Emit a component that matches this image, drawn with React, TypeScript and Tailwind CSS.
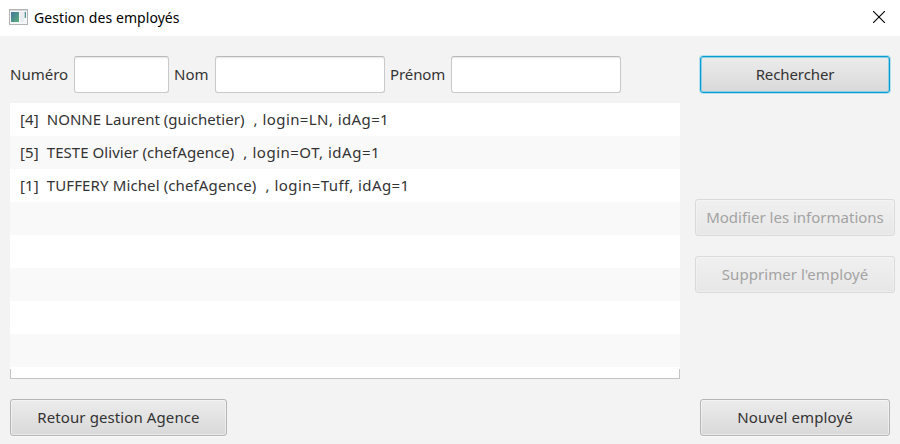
import React from "react";

const raised =
  "flex h-[37px] items-center justify-center rounded-[3px] border border-[#b5b5b5] bg-linear-to-b from-[#ececec] to-[#d9d9d9] pb-[2px] whitespace-pre shadow-[inset_0_0_0_1px_rgba(255,255,255,0.45),0_1px_0_#f9f9f9]";
const disabled =
  "flex h-[37px] w-[200px] items-center justify-center rounded-[3px] border border-[#dadada] bg-linear-to-b from-[#f0f0f0] to-[#e7e7e7] pb-[2px] whitespace-pre text-[#a3a3a3] shadow-[inset_0_0_0_1px_rgba(255,255,255,0.25)]";
const field =
  "h-[37px] rounded-[3px] border border-[#c9c9c9] border-t-[#b8b8b8] bg-white shadow-[inset_0_2px_2px_-1px_#e4e4e4] outline-none";

const employees = [
  { id: 4, name: "NONNE Laurent (guichetier)", details: "login=LN, idAg=1", nameClass: "tracking-[0.03px]", detailsClass: "tracking-[0.4px]" },
  { id: 5, name: "TESTE Olivier (chefAgence)", details: "login=OT, idAg=1", nameClass: "tracking-[0.05px]", detailsClass: "tracking-[0.5px]" },
  { id: 1, name: "TUFFERY Michel (chefAgence)", details: "login=Tuff, idAg=1", nameClass: "tracking-[0.12px]", detailsClass: "tracking-[0.4px]" },
];

function AppIcon() {
  return (
    <svg className="mb-[2px]" width="19" height="16" viewBox="0 0 19 16">
      <defs>
        <linearGradient id="pane" x1="0" y1="0" x2="1" y2="1">
          <stop offset="0" stopColor="#41759f" />
          <stop offset="1" stopColor="#5aae78" />
        </linearGradient>
      </defs>
      <rect x="0.5" y="0.5" width="18" height="15" fill="#f4f6f8" stroke="#b4b4b4" />
      <rect x="1" y="1" width="17" height="1" fill="#d4d6d8" />
      <rect x="2" y="3" width="8" height="10" fill="url(#pane)" />
      <rect x="11" y="3" width="4" height="10" fill="#e9ecf1" />
      <rect x="15.7" y="3" width="1.3" height="6" fill="url(#pane)" />
    </svg>
  );
}

export default function App() {
  return (
    <div className="flex h-[444px] w-[900px] flex-col overflow-hidden bg-[#f3f3f3] font-['Noto_Sans','Open_Sans',sans-serif] text-[15px] leading-[20px] text-[#333333]">
      <header className="flex h-[36px] shrink-0 items-center bg-white pr-[15px] pl-[9px] text-black">
        <AppIcon />
        <h1 className="ml-[6px] text-[14px] tracking-[0.07px] whitespace-pre">Gestion des employés</h1>
        <svg className="mb-[2px] ml-auto" width="12" height="12" viewBox="0 0 12 12" stroke="#000" strokeWidth="1.1">
          <path d="M0 0L12 12M12 0L0 12" />
        </svg>
      </header>
      <main className="flex h-[408px] justify-between pt-[20px] pr-[5px] pb-[8px] pl-[10px]">
        <section className="flex w-[670px] flex-col">
          <div className="flex items-center gap-[5px] whitespace-pre">
            <label className="w-[59px] pb-[2px]">Numéro</label>
            <input className={`${field} w-[95px]`} />
            <label className="w-[36px] pb-[2px]">Nom</label>
            <input className={`${field} w-[170px]`} />
            <label className="w-[56px] pb-[2px] tracking-[-0.1px]">Prénom</label>
            <input className={`${field} w-[170px]`} />
          </div>
          <ul className="mt-[10px]">
            {employees.map((e) => (
              <li key={e.id} className="flex h-[33px] items-center bg-white pb-[2px] pl-[10px] whitespace-pre even:bg-[#f9f9f9]">
                <span className="tracking-[0.1px]">{`[${e.id}]  `}</span>
                <span className={e.nameClass}>{e.name}</span>
                <span className="tracking-[0.6px]">{"  , "}</span>
                <span className={e.detailsClass}>{e.details}</span>
              </li>
            ))}
            {[0, 1, 2, 3, 4].map((n) => (
              <li key={n} className="h-[33px] bg-white even:bg-[#f9f9f9]" />
            ))}
            <li className="h-[2px] bg-white" />
            <li className="h-[10px] border border-t-0 border-[#c4c4c4] bg-white" />
          </ul>
          <button className={`${raised} mt-auto w-[217px] tracking-[0.1px]`}>Retour gestion Agence</button>
        </section>
        <aside className="flex w-[200px] flex-col items-center">
          <button className="flex h-[37px] w-[190px] items-center justify-center rounded-[3px] border border-[#039ed3] bg-linear-to-b from-[#ececec] to-[#d9d9d9] pb-[2px] shadow-[0_0_0_1px_#b5dfee,inset_0_0_0_1px_#8fcde3] tracking-[-0.1px]">
            Rechercher
          </button>
          <button disabled className={`${disabled} mt-[106px]`}>Modifier les informations</button>
          <button disabled className={`${disabled} mt-[20px] tracking-[0.05px]`}>Supprimer l'employé</button>
          <button className={`${raised} mt-auto w-[190px] tracking-[0.1px]`}>Nouvel employé</button>
        </aside>
      </main>
    </div>
  );
}
